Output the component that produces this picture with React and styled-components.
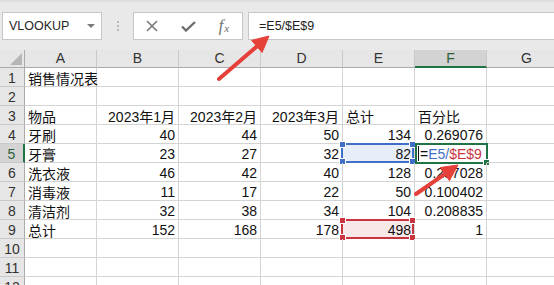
import React from "react";
import styled, { createGlobalStyle } from "styled-components";

const GlobalStyle = createGlobalStyle`
  body {
    margin: 0;
    background: #ffffff;
    overflow: hidden;
    font-family: "Liberation Sans", "Noto Sans CJK SC", sans-serif;
  }
`;

const Page = styled.div`
  position: relative;
  width: 554px;
  height: 285px;
  overflow: hidden;
  background: #ffffff;
`;

const Toolbar = styled.div`
  height: 50px;
  box-sizing: border-box;
  background: #e9e9e9;
  border-top: 2px solid #dedede;
  padding: 10px 0 0 2px;
  display: flex;
  align-items: flex-start;
`;

const NameBox = styled.div`
  width: 100px;
  height: 28px;
  box-sizing: border-box;
  border: 1px solid #c6c6c6;
  background: #ffffff;
  display: flex;
  align-items: center;
  justify-content: space-between;
  padding: 0 6px 0 6px;
  font-size: 12.5px;
  color: #262626;
`;

const DropArrow = styled.span`
  width: 0;
  height: 0;
  border-left: 4px solid transparent;
  border-right: 4px solid transparent;
  border-top: 4px solid #7a7a7a;
`;

const Grip = styled.div`
  width: 31px;
  height: 28px;
  display: flex;
  flex-direction: column;
  align-items: center;
  justify-content: center;
  gap: 2px;
`;

const Dot = styled.span`
  width: 2px;
  height: 2px;
  background: #b9b9b9;
`;

const ButtonBox = styled.div`
  width: 110px;
  height: 28px;
  box-sizing: border-box;
  border: 1px solid #c6c6c6;
  background: #ffffff;
  display: flex;
  align-items: center;
`;

const IconSlot = styled.div`
  width: 36px;
  height: 26px;
  display: flex;
  align-items: center;
  justify-content: center;
  color: #737373;
`;

const Fx = styled.span`
  font-family: "Liberation Serif", serif;
  font-style: italic;
  font-size: 16px;
  color: #6e6e6e;
  line-height: 1;

  small {
    font-size: 11px;
    margin-left: 1px;
    position: relative;
    top: 1px;
  }
`;

const FormulaBox = styled.div`
  flex: 1;
  margin-left: 5px;
  height: 28px;
  box-sizing: border-box;
  border: 1px solid #c6c6c6;
  border-right: none;
  background: #ffffff;
  display: flex;
  align-items: center;
  padding-left: 10px;
  font-size: 12.5px;
  color: #222222;
`;

const Sheet = styled.div`
  display: grid;
  grid-template-columns: 25px 72px 82px 82px 82px 72px 72px 80px;
  grid-template-rows: 18px repeat(12, 19px);
  font-size: 14px;
  color: #111111;
`;

const Corner = styled.div`
  position: relative;
  background: #e6e6e6;
  border-right: 1px solid #ababab;
  border-bottom: 1px solid #ababab;

  &::after {
    content: "";
    position: absolute;
    right: 2px;
    bottom: 2px;
    width: 0;
    height: 0;
    border-left: 12px solid transparent;
    border-bottom: 12px solid #b6b6b6;
  }
`;

const ColHead = styled.div`
  box-sizing: border-box;
  background: ${(p) => (p.$active ? "#d3d3d3" : "#e6e6e6")};
  border-right: 1px solid #c9c9c9;
  border-bottom: ${(p) => (p.$active ? "2px solid #217346" : "1px solid #ababab")};
  color: ${(p) => (p.$active ? "#2b5f3a" : "#333333")};
  display: flex;
  align-items: center;
  justify-content: center;
  line-height: 17px;
`;

const RowHead = styled.div`
  box-sizing: border-box;
  background: ${(p) => (p.$active ? "#d3d3d3" : "#e6e6e6")};
  border-right: ${(p) => (p.$active ? "2px solid #217346" : "1px solid #ababab")};
  border-bottom: 1px solid #c9c9c9;
  color: ${(p) => (p.$active ? "#2b5f3a" : "#333333")};
  display: flex;
  align-items: center;
  justify-content: center;
  padding-top: 1px;
`;

const Cell = styled.div`
  position: relative;
  box-sizing: border-box;
  border-right: 1px solid #d4d4d4;
  border-bottom: 1px solid #d4d4d4;
  background: ${(p) => p.$fill || "transparent"};
  display: flex;
  align-items: center;
  justify-content: ${(p) => (p.$right ? "flex-end" : "flex-start")};
  padding: 1px 3px 0 3px;
  white-space: nowrap;
  overflow: visible;
`;

const Mark = styled.div`
  position: absolute;
  top: -1px;
  left: ${(p) => p.$left}px;
  right: ${(p) => p.$right}px;
  bottom: ${(p) => p.$bottom}px;
  border: 2px solid ${(p) => p.$color};
  pointer-events: none;
`;

const Handle = styled.span`
  position: absolute;
  width: 5px;
  height: 5px;
  background: ${(p) => p.$color};
  border: 1px solid #ffffff;
  ${(p) => (p.$top ? "top: -4px;" : "bottom: -4px;")}
  ${(p) => (p.$leftSide ? "left: -4px;" : "right: -4px;")}
`;

const Caret = styled.span`
  display: inline-block;
  width: 1px;
  height: 15px;
  background: #111111;
  margin-right: 1px;
`;

const Ref = styled.span`
  color: ${(p) => p.$color};
`;

const Overlay = styled.svg`
  position: absolute;
  left: 0;
  top: 0;
  pointer-events: none;
`;

const BLUE = "#3f6fc6";
const RED = "#c8353f";
const GREEN = "#217346";

const cols = ["A", "B", "C", "D", "E", "F", "G"];

const rows = [
  ["销售情况表"],
  [],
  ["物品", "2023年1月", "2023年2月", "2023年3月", "总计", "百分比"],
  ["牙刷", 40, 44, 50, 134, "0.269076"],
  ["牙膏", 23, 27, 32, 82, "formula"],
  ["洗衣液", 46, 42, 40, 128, "0.257028"],
  ["消毒液", 11, 17, 22, 50, "0.100402"],
  ["清洁剂", 32, 38, 34, 104, "0.208835"],
  ["总计", 152, 168, 178, 498, 1],
  [],
  [],
  [],
];

function Corners({ color, only }) {
  if (only) return <Handle $color={color} />;
  return (
    <>
      <Handle $color={color} $top $leftSide />
      <Handle $color={color} $top />
      <Handle $color={color} $leftSide />
      <Handle $color={color} />
    </>
  );
}

function Formula() {
  return (
    <>
      <Caret />
      <span>=</span>
      <Ref $color={BLUE}>E5/</Ref>
      <Ref $color={RED}>$E$9</Ref>
    </>
  );
}

function renderCell(r, c) {
  const v = rows[r][c];
  const key = `${r}-${c}`;
  const right = v !== undefined && /^\d/.test(String(v));

  if (r === 4 && c === 4) {
    return (
      <Cell key={key} $right $fill="#e8eef9">
        {v}
        <Mark $color={BLUE} $left={-2} $right={0} $bottom={-1}>
          <Corners color={BLUE} />
        </Mark>
      </Cell>
    );
  }
  if (r === 4 && c === 5) {
    return (
      <Cell key={key}>
        <Formula />
        <Mark $color={GREEN} $left={0} $right={-2} $bottom={-2}>
          <Corners color={GREEN} only />
        </Mark>
      </Cell>
    );
  }
  if (r === 8 && c === 4) {
    return (
      <Cell key={key} $right $fill="#f9e8e8">
        {v}
        <Mark $color={RED} $left={-2} $right={0} $bottom={-1}>
          <Corners color={RED} />
        </Mark>
      </Cell>
    );
  }
  return (
    <Cell key={key} $right={right}>
      {v}
    </Cell>
  );
}

function Arrow({ x1, y1, x2, y2 }) {
  const dx = x2 - x1;
  const dy = y2 - y1;
  const len = Math.hypot(dx, dy);
  const ux = dx / len;
  const uy = dy / len;
  const head = 16;
  const half = 8;
  const bx = x2 - ux * head;
  const by = y2 - uy * head;
  const pts = [
    [x2, y2],
    [bx - uy * half, by + ux * half],
    [bx + uy * half, by - ux * half],
  ]
    .map((p) => p.join(","))
    .join(" ");
  return (
    <g fill="#e5403a" stroke="#e5403a">
      <line x1={x1} y1={y1} x2={bx + ux * 2} y2={by + uy * 2} strokeWidth="4" strokeLinecap="round" />
      <polygon points={pts} strokeWidth="1" strokeLinejoin="round" />
    </g>
  );
}

export default function App() {
  return (
    <Page>
      <GlobalStyle />
      <Toolbar>
        <NameBox>
          VLOOKUP
          <DropArrow />
        </NameBox>
        <Grip>
          <Dot />
          <Dot />
          <Dot />
        </Grip>
        <ButtonBox>
          <IconSlot>
            <svg width="12" height="12" viewBox="0 0 12 12">
              <path d="M1 1 L11 11 M11 1 L1 11" stroke="#777" strokeWidth="1.6" />
            </svg>
          </IconSlot>
          <IconSlot>
            <svg width="15" height="11" viewBox="0 0 15 11">
              <path d="M1 5.5 L5 9.5 L14 1" stroke="#6d6d6d" strokeWidth="2.4" fill="none" />
            </svg>
          </IconSlot>
          <IconSlot>
            <Fx>
              f<small>x</small>
            </Fx>
          </IconSlot>
        </ButtonBox>
        <FormulaBox>=E5/$E$9</FormulaBox>
      </Toolbar>

      <Sheet>
        <Corner />
        {cols.map((c) => (
          <ColHead key={c} $active={c === "F"}>
            {c}
          </ColHead>
        ))}
        {rows.map((row, r) => (
          <React.Fragment key={r}>
            <RowHead $active={r === 4}>{r + 1}</RowHead>
            {cols.map((_, c) => renderCell(r, c))}
          </React.Fragment>
        ))}
      </Sheet>

      <Overlay width="554" height="285">
        <Arrow x1={219} y1={79} x2={269} y2={36} />
        <Arrow x1={416} y1={194} x2={458} y2={165} />
      </Overlay>
    </Page>
  );
}
